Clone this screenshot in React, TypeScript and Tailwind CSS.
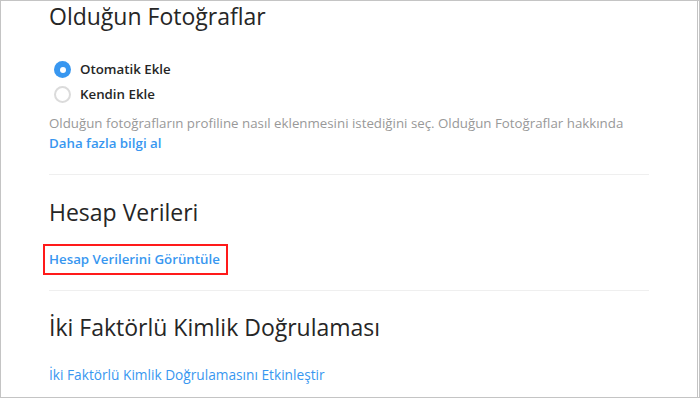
import React from "react";

export default function App() {
  return (
    <div
      className="w-[700px] h-[398px] border border-[#c4c4c4] bg-white overflow-hidden text-[#262626]"
      style={{ fontFamily: '"Open Sans", "Noto Sans", sans-serif' }}
    >
      <div className="h-full w-[697px] border-r border-[#c4c4c4] pl-[48px]">
        <div className="w-[600px] flex flex-col">
          <h2 className="text-[23px] leading-[30px] font-normal">Olduğun Fotoğraflar</h2>

          <div className="mt-[26px] flex flex-col">
            <label className="h-[25px] flex items-center gap-[9px] pl-[5px]">
              <span className="w-[17px] h-[17px] rounded-full bg-[#3897f0] flex items-center justify-center">
                <span className="w-[6px] h-[6px] rounded-full bg-white" />
              </span>
              <span className="text-[13.3px] font-semibold">Otomatik Ekle</span>
            </label>
            <label className="h-[25px] flex items-center gap-[9px] pl-[5px]">
              <span className="w-[17px] h-[17px] rounded-full border-2 border-[#dbdbdb]" />
              <span className="text-[13.3px] font-semibold">Kendin Ekle</span>
            </label>
          </div>

          <p className="mt-[6px] text-[13.3px] leading-[20px] text-[#999999] whitespace-nowrap">
            Olduğun fotoğrafların profiline nasıl eklenmesini istediğini seç. Olduğun Fotoğraflar hakkında
          </p>
          <a className="text-[13.3px] leading-[20px] font-semibold text-[#3897f0]">Daha fazla bilgi al</a>

          <div className="mt-[21px] h-px bg-[#efefef]" />

          <h2 className="mt-[22px] text-[23px] leading-[30px] font-normal">Hesap Verileri</h2>

          <div className="mt-[17px] flex">
            <a className="-ml-[6px] border-2 border-[#ff1a1a] pl-[4px] pr-[6px] h-[31px] flex items-center text-[13.3px] font-semibold text-[#3897f0]">
              Hesap Verilerini Görüntüle
            </a>
          </div>

          <div className="mt-[15px] h-px bg-[#efefef]" />

          <h2 className="mt-[21px] text-[23px] leading-[30px] font-normal">İki Faktörlü Kimlik Doğrulaması</h2>

          <a className="mt-[23px] text-[13.7px] leading-[20px] font-normal text-[#3897f0]">
            İki Faktörlü Kimlik Doğrulamasını Etkinleştir
          </a>
        </div>
      </div>
    </div>
  );
}
